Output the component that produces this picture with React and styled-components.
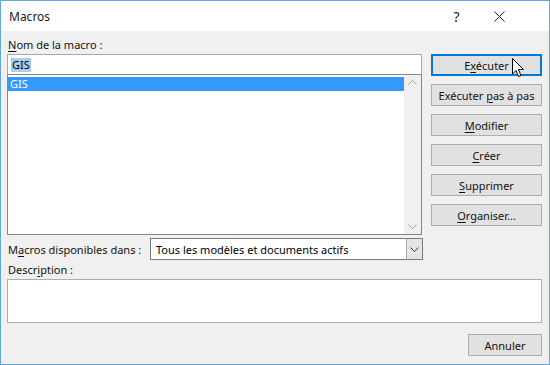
import React from "react";
import styled, { createGlobalStyle } from "styled-components";

const GlobalStyle = createGlobalStyle`
  html, body {
    margin: 0;
    padding: 0;
    background: #ffffff;
  }
  body {
    font-family: "Noto Sans", "Open Sans", sans-serif;
    font-size: 11px;
    color: #000;
  }
  u {
    text-decoration-thickness: 1px;
    text-underline-offset: 2px;
  }
`;

const Window = styled.div`
  width: 550px;
  height: 365px;
  box-sizing: border-box;
  border: 1px solid #62a7dc;
  display: flex;
  flex-direction: column;
  background: #f0f0f0;
  position: relative;
  overflow: hidden;
`;

const TitleBar = styled.div`
  height: 30px;
  background: #fff;
  display: flex;
  align-items: center;
  padding-left: 8px;
  padding-right: 28px;
  font-size: 12px;
  color: #1a1a1a;
`;

const Title = styled.div`
  flex: 1;
`;

const TitleButton = styled.div`
  width: 43px;
  display: flex;
  justify-content: center;
  align-items: center;
  color: #222;
  font-size: 14px;
`;

const Body = styled.div`
  flex: 1;
  display: flex;
  flex-direction: column;
  padding: 4px 7px 0 6px;
`;

const TopArea = styled.div`
  display: flex;
  gap: 9px;
`;

const LeftCol = styled.div`
  width: 415px;
  display: flex;
  flex-direction: column;
`;

const Label = styled.div`
  height: 19px;
  line-height: 19px;
  color: #111;
  padding-left: 1px;
  white-space: nowrap;
`;

const Input = styled.div`
  height: 20px;
  box-sizing: border-box;
  background: #fff;
  border: 1px solid #a9a9a9;
  border-bottom: none;
  display: flex;
  align-items: center;
  padding-left: 3px;
`;

const Selected = styled.span`
  background: #a8cdf1;
  padding: 0 1px;
  line-height: 14px;
`;

const ListBox = styled.div`
  height: 161px;
  box-sizing: border-box;
  background: #fff;
  border: 1px solid #828790;
  display: flex;
`;

const ListItems = styled.div`
  flex: 1;
  padding-top: 2px;
`;

const ListItem = styled.div`
  height: 14px;
  line-height: 14px;
  padding-left: 2px;
  background: ${(p) => (p.$active ? "#3399ff" : "transparent")};
  color: ${(p) => (p.$active ? "#fff" : "#000")};
`;

const ScrollBar = styled.div`
  width: 17px;
  background: #f0f0f0;
  display: flex;
  flex-direction: column;
  justify-content: space-between;
  align-items: center;
  padding: 5px 0;
`;

const RightCol = styled.div`
  width: 111px;
  display: flex;
  flex-direction: column;
  gap: 8px;
  padding-top: 19px;
`;

const Button = styled.div`
  height: 22px;
  box-sizing: border-box;
  background: #e1e1e1;
  border: ${(p) => (p.$focused ? "2px solid #0078d7" : "1px solid #adadad")};
  display: flex;
  align-items: center;
  justify-content: center;
  color: #111;
  white-space: nowrap;
  width: ${(p) => p.$width || "auto"};
`;

const SourceRow = styled.div`
  display: flex;
  align-items: center;
  margin-top: 3px;
  height: 22px;
`;

const SourceLabel = styled.div`
  width: 142px;
  padding-left: 1px;
  color: #111;
  white-space: nowrap;
`;

const Combo = styled.div`
  width: 273px;
  height: 22px;
  box-sizing: border-box;
  background: #fff;
  border: 1px solid #7a7a7a;
  display: flex;
  align-items: center;
  padding-left: 5px;
`;

const ComboText = styled.div`
  flex: 1;
`;

const ComboButton = styled.div`
  width: 16px;
  height: 20px;
  box-sizing: border-box;
  background: #e5e5e5;
  border-left: 1px solid #adadad;
  display: flex;
  align-items: center;
  justify-content: center;
`;

const DescBox = styled.div`
  height: 44px;
  box-sizing: border-box;
  background: #fff;
  border: 1px solid #adadad;
`;

const Footer = styled.div`
  display: flex;
  justify-content: flex-end;
  margin-top: 11px;
`;

const Cursor = styled.svg`
  position: absolute;
  left: 511px;
  top: 57px;
`;

const Chevron = ({ up, color = "#a0a0a0" }) => (
  <svg width="9" height="5" viewBox="0 0 9 5">
    <polyline
      points={up ? "0.5,4.5 4.5,0.5 8.5,4.5" : "0.5,0.5 4.5,4.5 8.5,0.5"}
      fill="none"
      stroke={color}
      strokeWidth="1"
    />
  </svg>
);

export default function App() {
  return (
    <>
      <GlobalStyle />
      <Window>
        <TitleBar>
          <Title>Macros</Title>
          <TitleButton>?</TitleButton>
          <TitleButton>
            <svg width="11" height="11" viewBox="0 0 11 11">
              <path d="M0.5 0.5 L10.5 10.5 M10.5 0.5 L0.5 10.5" stroke="#222" strokeWidth="1" />
            </svg>
          </TitleButton>
        </TitleBar>
        <Body>
          <TopArea>
            <LeftCol>
              <Label>
                <u>N</u>om de la macro :
              </Label>
              <Input>
                <Selected>GIS</Selected>
              </Input>
              <ListBox>
                <ListItems>
                  <ListItem $active>GIS</ListItem>
                </ListItems>
                <ScrollBar>
                  <Chevron up />
                  <Chevron />
                </ScrollBar>
              </ListBox>
            </LeftCol>
            <RightCol>
              <Button $focused>
                <span>
                  E<u>x</u>écuter
                </span>
              </Button>
              <Button>
                <span>
                  Exécuter <u>p</u>as à pas
                </span>
              </Button>
              <Button>
                <span>
                  <u>M</u>odifier
                </span>
              </Button>
              <Button>
                <span>
                  <u>C</u>réer
                </span>
              </Button>
              <Button>
                <span>
                  <u>S</u>upprimer
                </span>
              </Button>
              <Button>
                <span>
                  <u>O</u>rganiser...
                </span>
              </Button>
            </RightCol>
          </TopArea>
          <SourceRow>
            <SourceLabel>
              M<u>a</u>cros disponibles dans :
            </SourceLabel>
            <Combo>
              <ComboText>Tous les modèles et documents actifs</ComboText>
              <ComboButton>
                <Chevron color="#333" />
              </ComboButton>
            </Combo>
          </SourceRow>
          <Label>
            Descr<u>i</u>ption :
          </Label>
          <DescBox />
          <Footer>
            <Button $width="74px">Annuler</Button>
          </Footer>
        </Body>
        <Cursor width="13" height="20" viewBox="0 0 13 20">
          <path
            d="M0.5 0.5 L0.5 16 L4 12.5 L6.5 18.5 L9 17.5 L6.5 11.5 L11.5 11.5 Z"
            fill="#fff"
            stroke="#000"
            strokeWidth="1"
            strokeLinejoin="round"
          />
        </Cursor>
      </Window>
    </>
  );
}
